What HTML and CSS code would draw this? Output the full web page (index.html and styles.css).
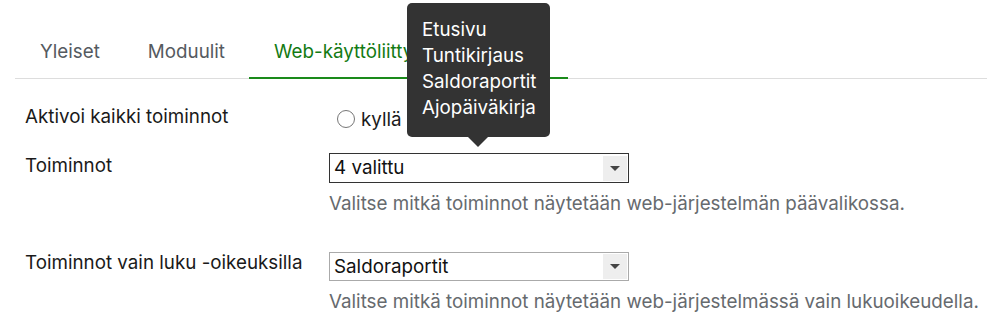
FILE: index.html
```html
<!DOCTYPE html>
<html lang="fi">
<head>
<meta charset="utf-8">
<title>Asetukset</title>
<link rel="stylesheet" href="styles.css">
</head>
<body>
<div class="page">
  <ul class="tabs">
    <li class="tab">Yleiset</li>
    <li class="tab">Moduulit</li>
    <li class="tab active">Web-käyttöliittymä ja mobiili
      <div class="tooltip">
        <div>Etusivu</div>
        <div>Tuntikirjaus</div>
        <div>Saldoraportit</div>
        <div>Ajopäiväkirja</div>
      </div>
    </li>
  </ul>
  <div class="form">
    <div class="row row-first">
      <div class="label">Aktivoi kaikki toiminnot</div>
      <div class="control">
        <label class="radio"><span class="radio-circle"></span>kyllä</label>
      </div>
    </div>
    <div class="row">
      <div class="label">Toiminnot</div>
      <div class="control">
        <div class="select focused"><span class="select-text">4 valittu</span><span class="select-arrow"></span></div>
        <div class="help">Valitse mitkä toiminnot näytetään web-järjestelmän päävalikossa.</div>
      </div>
    </div>
    <div class="row row-last">
      <div class="label">Toiminnot vain luku -oikeuksilla</div>
      <div class="control">
        <div class="select"><span class="select-text">Saldoraportit</span><span class="select-arrow"></span></div>
        <div class="help">Valitse mitkä toiminnot näytetään web-järjestelmässä vain lukuoikeudella.</div>
      </div>
    </div>
  </div>
</div>
</body>
</html>
```

FILE: styles.css
```css
* { box-sizing: border-box; }
html, body { margin: 0; padding: 0; background: #fff; }
body {
  font-family: Inter, "Noto Sans", sans-serif;
  font-size: 18.8px;
  line-height: 26px;
  color: #1a1a1a;
}
.page { padding: 0 0 0 15px; }
.tabs {
  list-style: none;
  margin: 0;
  padding: 39px 0 0 1px;
  display: flex;
  border-bottom: 1px solid #dddddd;
}
.tab {
  position: relative;
  padding: 0 24px 13px;
  color: #555a5f;
  white-space: nowrap;
}
.tab.active {
  color: #137a13;
  border-bottom: 2px solid #1a8a1a;
  margin-bottom: -1px;
  padding: 0 25px 12px;
  width: 319px;
  overflow: visible;
}
.tooltip {
  position: absolute;
  left: 158px;
  top: -36px;
  width: 143px;
  padding: 14px 15px 16px;
  background: #333333;
  color: #ffffff;
  border-radius: 5px;
  line-height: 26px;
  z-index: 2;
}
.tooltip::after {
  content: "";
  position: absolute;
  left: 61px;
  bottom: -10px;
  border-left: 10px solid transparent;
  border-right: 10px solid transparent;
  border-top: 10px solid #333333;
}
.form { padding: 0 0 0 10px; }
.row { display: flex; }
.row-first { padding-top: 25px; height: 74px; }
.row.row-last { margin-top: 35px; }
.label { width: 304px; flex: none; }
.row-last .label { margin-top: -2px; }
.control { flex: 1; }
.radio { display: inline-flex; align-items: center; gap: 6px; padding-left: 8px; margin-top: 3px; }
.radio-circle {
  width: 18px; height: 18px;
  border: 1.5px solid #767676;
  border-radius: 50%;
  display: inline-block;
  margin-top: -3px;
}
.select {
  width: 300px;
  height: 30px;
  border: 1px solid #aaaaaa;
  padding: 1px 1px 1px 4px;
  display: flex;
  align-items: center;
  justify-content: space-between;
  color: #111;
}
.row-last .select { height: 29px; }
.select.focused { border-color: #333333; }
.select-arrow {
  width: 24px;
  height: 25px;
  background: #eeeeee;
  position: relative;
}
.select-arrow::after {
  content: "";
  position: absolute;
  left: 7px;
  top: 10px;
  border-left: 5px solid transparent;
  border-right: 5px solid transparent;
  border-top: 5px solid #444;
}
.help { color: #666a6e; margin-top: 8px; }
```
